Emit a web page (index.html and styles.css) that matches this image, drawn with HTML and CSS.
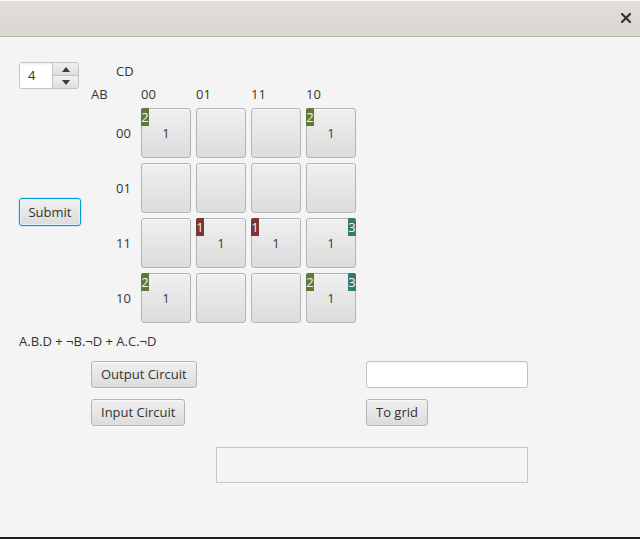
FILE: index.html
```html
<!DOCTYPE html>
<html lang="en">
<head>
<meta charset="utf-8">
<title>K-Map</title>
<link rel="stylesheet" href="styles.css">
</head>
<body>
<div class="window">
  <div class="titlebar">
    <svg class="close" width="10" height="10" viewBox="0 0 10 10" aria-label="Close">
      <path d="M1 1 L9 9 M9 1 L1 9" stroke="#2e3436" stroke-width="2.2" stroke-linecap="square"/>
    </svg>
  </div>
  <div class="content">
    <div class="kmap">
      <div class="spinner">
        <div class="spinner-value">4</div>
        <div class="spinner-buttons">
          <div class="spin-btn"><span class="arrow-up"></span></div>
          <div class="spin-btn"><span class="arrow-down"></span></div>
        </div>
      </div>
      <button class="btn submit">Submit</button>

      <div class="lbl cd">CD</div>
      <div class="lbl ab">AB</div>
      <div class="lbl colh c1">00</div>
      <div class="lbl colh c2">01</div>
      <div class="lbl colh c3">11</div>
      <div class="lbl colh c4">10</div>

      <div class="lbl rowh r1">00</div>
      <div class="lbl rowh r2">01</div>
      <div class="lbl rowh r3">11</div>
      <div class="lbl rowh r4">10</div>

      <div class="cell r1 c1"><span class="badge green left">2</span>1</div>
      <div class="cell r1 c2"></div>
      <div class="cell r1 c3"></div>
      <div class="cell r1 c4"><span class="badge green left">2</span>1</div>

      <div class="cell r2 c1"></div>
      <div class="cell r2 c2"></div>
      <div class="cell r2 c3"></div>
      <div class="cell r2 c4"></div>

      <div class="cell r3 c1"></div>
      <div class="cell r3 c2"><span class="badge red left">1</span>1</div>
      <div class="cell r3 c3"><span class="badge red left">1</span>1</div>
      <div class="cell r3 c4"><span class="badge teal right">3</span>1</div>

      <div class="cell r4 c1"><span class="badge green left">2</span>1</div>
      <div class="cell r4 c2"></div>
      <div class="cell r4 c3"></div>
      <div class="cell r4 c4"><span class="badge green left">2</span><span class="badge teal right">3</span>1</div>
    </div>

    <div class="expr">A.B.D + ¬B.¬D + A.C.¬D</div>

    <div class="actions">
      <button class="btn">Output Circuit</button>
      <div class="textfield"></div>
      <button class="btn">Input Circuit</button>
      <button class="btn">To grid</button>
    </div>

    <div class="output-box"></div>
  </div>
  <div class="bottom-edge"></div>
</div>
</body>
</html>
```

FILE: styles.css
```css
* { box-sizing: border-box; }

html, body {
  margin: 0;
  padding: 0;
}

body {
  font-family: "Open Sans", "Noto Sans", sans-serif;
  font-size: 13px;
  color: #333333;
  background: #f4f4f4;
}

.window {
  width: 640px;
  height: 539px;
  display: flex;
  flex-direction: column;
  background: #f4f4f4;
}

.titlebar {
  height: 37px;
  flex: none;
  border-top: 1px solid #f7f6f5;
  border-bottom: 1px solid #bfb6ad;
  background: linear-gradient(to bottom, #e1ddd9, #d9d5d0);
  display: flex;
  align-items: center;
  justify-content: flex-end;
  padding-right: 9px;
}

.close {
  display: block;
  margin-top: -1px;
}

.content {
  flex: 1;
  padding: 25px 0 0 19px;
}

/* K-map grid */
.kmap {
  display: grid;
  grid-template-columns: 67px 20px 20px repeat(4, 50px);
  grid-template-rows: 19px 17px repeat(4, 50px);
  column-gap: 5px;
  row-gap: 5px;
}

.lbl {
  white-space: nowrap;
  line-height: 17px;
}

.cd { grid-column: 3; grid-row: 1; line-height: 19px; }
.ab { grid-column: 2; grid-row: 2; }
.colh { grid-row: 2; }
.rowh { grid-column: 3; align-self: center; }

.c1 { grid-column: 4; }
.c2 { grid-column: 5; }
.c3 { grid-column: 6; }
.c4 { grid-column: 7; }
.r1 { grid-row: 3; }
.r2 { grid-row: 4; }
.r3 { grid-row: 5; }
.r4 { grid-row: 6; }

.cell {
  position: relative;
  border: 1px solid #b3b3b3;
  border-radius: 3px;
  background: linear-gradient(to bottom, #f0f0f0, #dcdcdc);
  box-shadow: inset 0 1px 0 rgba(255,255,255,0.6), 0 1px 0 rgba(255,255,255,0.5);
  display: flex;
  align-items: center;
  justify-content: center;
  color: #3a3a3a;
}

.badge {
  position: absolute;
  top: -1px;
  width: 8px;
  height: 18px;
  color: #f2f2f2;
  line-height: 18px;
  text-align: center;
  font-size: 13px;
}
.badge.left { left: -1px; border-top-left-radius: 2px; }
.badge.right { right: -1px; border-top-right-radius: 2px; }
.badge.green { background: #5f7a36; }
.badge.red { background: #7c3535; }
.badge.teal { background: #387a6e; }

/* spinner */
.spinner {
  grid-column: 1;
  grid-row: 1 / span 2;
  align-self: start;
  width: 60px;
  height: 27px;
  display: flex;
  border: 1px solid #c2c2c2;
  border-radius: 3px;
  background: #fff;
  overflow: hidden;
}
.spinner-value {
  width: 32px;
  padding-left: 8px;
  line-height: 25px;
  background: linear-gradient(to bottom, #f3f3f3 0, #ffffff 3px);
}
.spinner-buttons {
  flex: 1;
  display: flex;
  flex-direction: column;
  border-left: 1px solid #c2c2c2;
}
.spin-btn {
  flex: 1;
  display: flex;
  align-items: center;
  justify-content: center;
  background: linear-gradient(to bottom, #f0f0f0, #dedede);
}
.spin-btn + .spin-btn { border-top: 1px solid #c2c2c2; }
.arrow-up, .arrow-down {
  width: 0;
  height: 0;
  border-left: 4px solid transparent;
  border-right: 4px solid transparent;
}
.arrow-up { border-bottom: 5px solid #3a3a3a; }
.arrow-down { border-top: 5px solid #3a3a3a; }

/* buttons */
.btn {
  font-family: inherit;
  font-size: 13px;
  color: #333;
  height: 27px;
  padding: 0 9px 0 9px;
  border: 1px solid #b3b3b3;
  border-radius: 3px;
  background: linear-gradient(to bottom, #f0f0f0, #dcdcdc);
  box-shadow: inset 0 1px 0 rgba(255,255,255,0.6), 0 1px 0 rgba(255,255,255,0.6);
  justify-self: start;
  line-height: 25px;
  cursor: default;
}

.submit {
  grid-column: 1;
  grid-row: 3 / span 4;
  align-self: start;
  margin-top: 90px;
  height: 28px;
  width: 62px;
  padding: 0;
  border: 1px solid #039ed3;
  box-shadow: inset 0 0 0 1px #dff2fa, 0 0 0 1px rgba(3,158,211,0.15);
}

.expr {
  margin-top: 10px;
  line-height: 17px;
}

.actions {
  margin: 11px 0 0 72px;
  display: grid;
  grid-template-columns: 275px 162px;
  grid-template-rows: 27px 27px;
  row-gap: 11px;
}

.textfield {
  height: 27px;
  border: 1px solid #c2c2c2;
  border-radius: 3px;
  background: linear-gradient(to bottom, #f1f1f1 0, #ffffff 3px);
}

.output-box {
  margin: 21px 0 0 197px;
  width: 312px;
  height: 36px;
  border: 1px solid #c6c6c6;
}

.bottom-edge {
  height: 2px;
  flex: none;
  background: #1b1b1b;
}
```
